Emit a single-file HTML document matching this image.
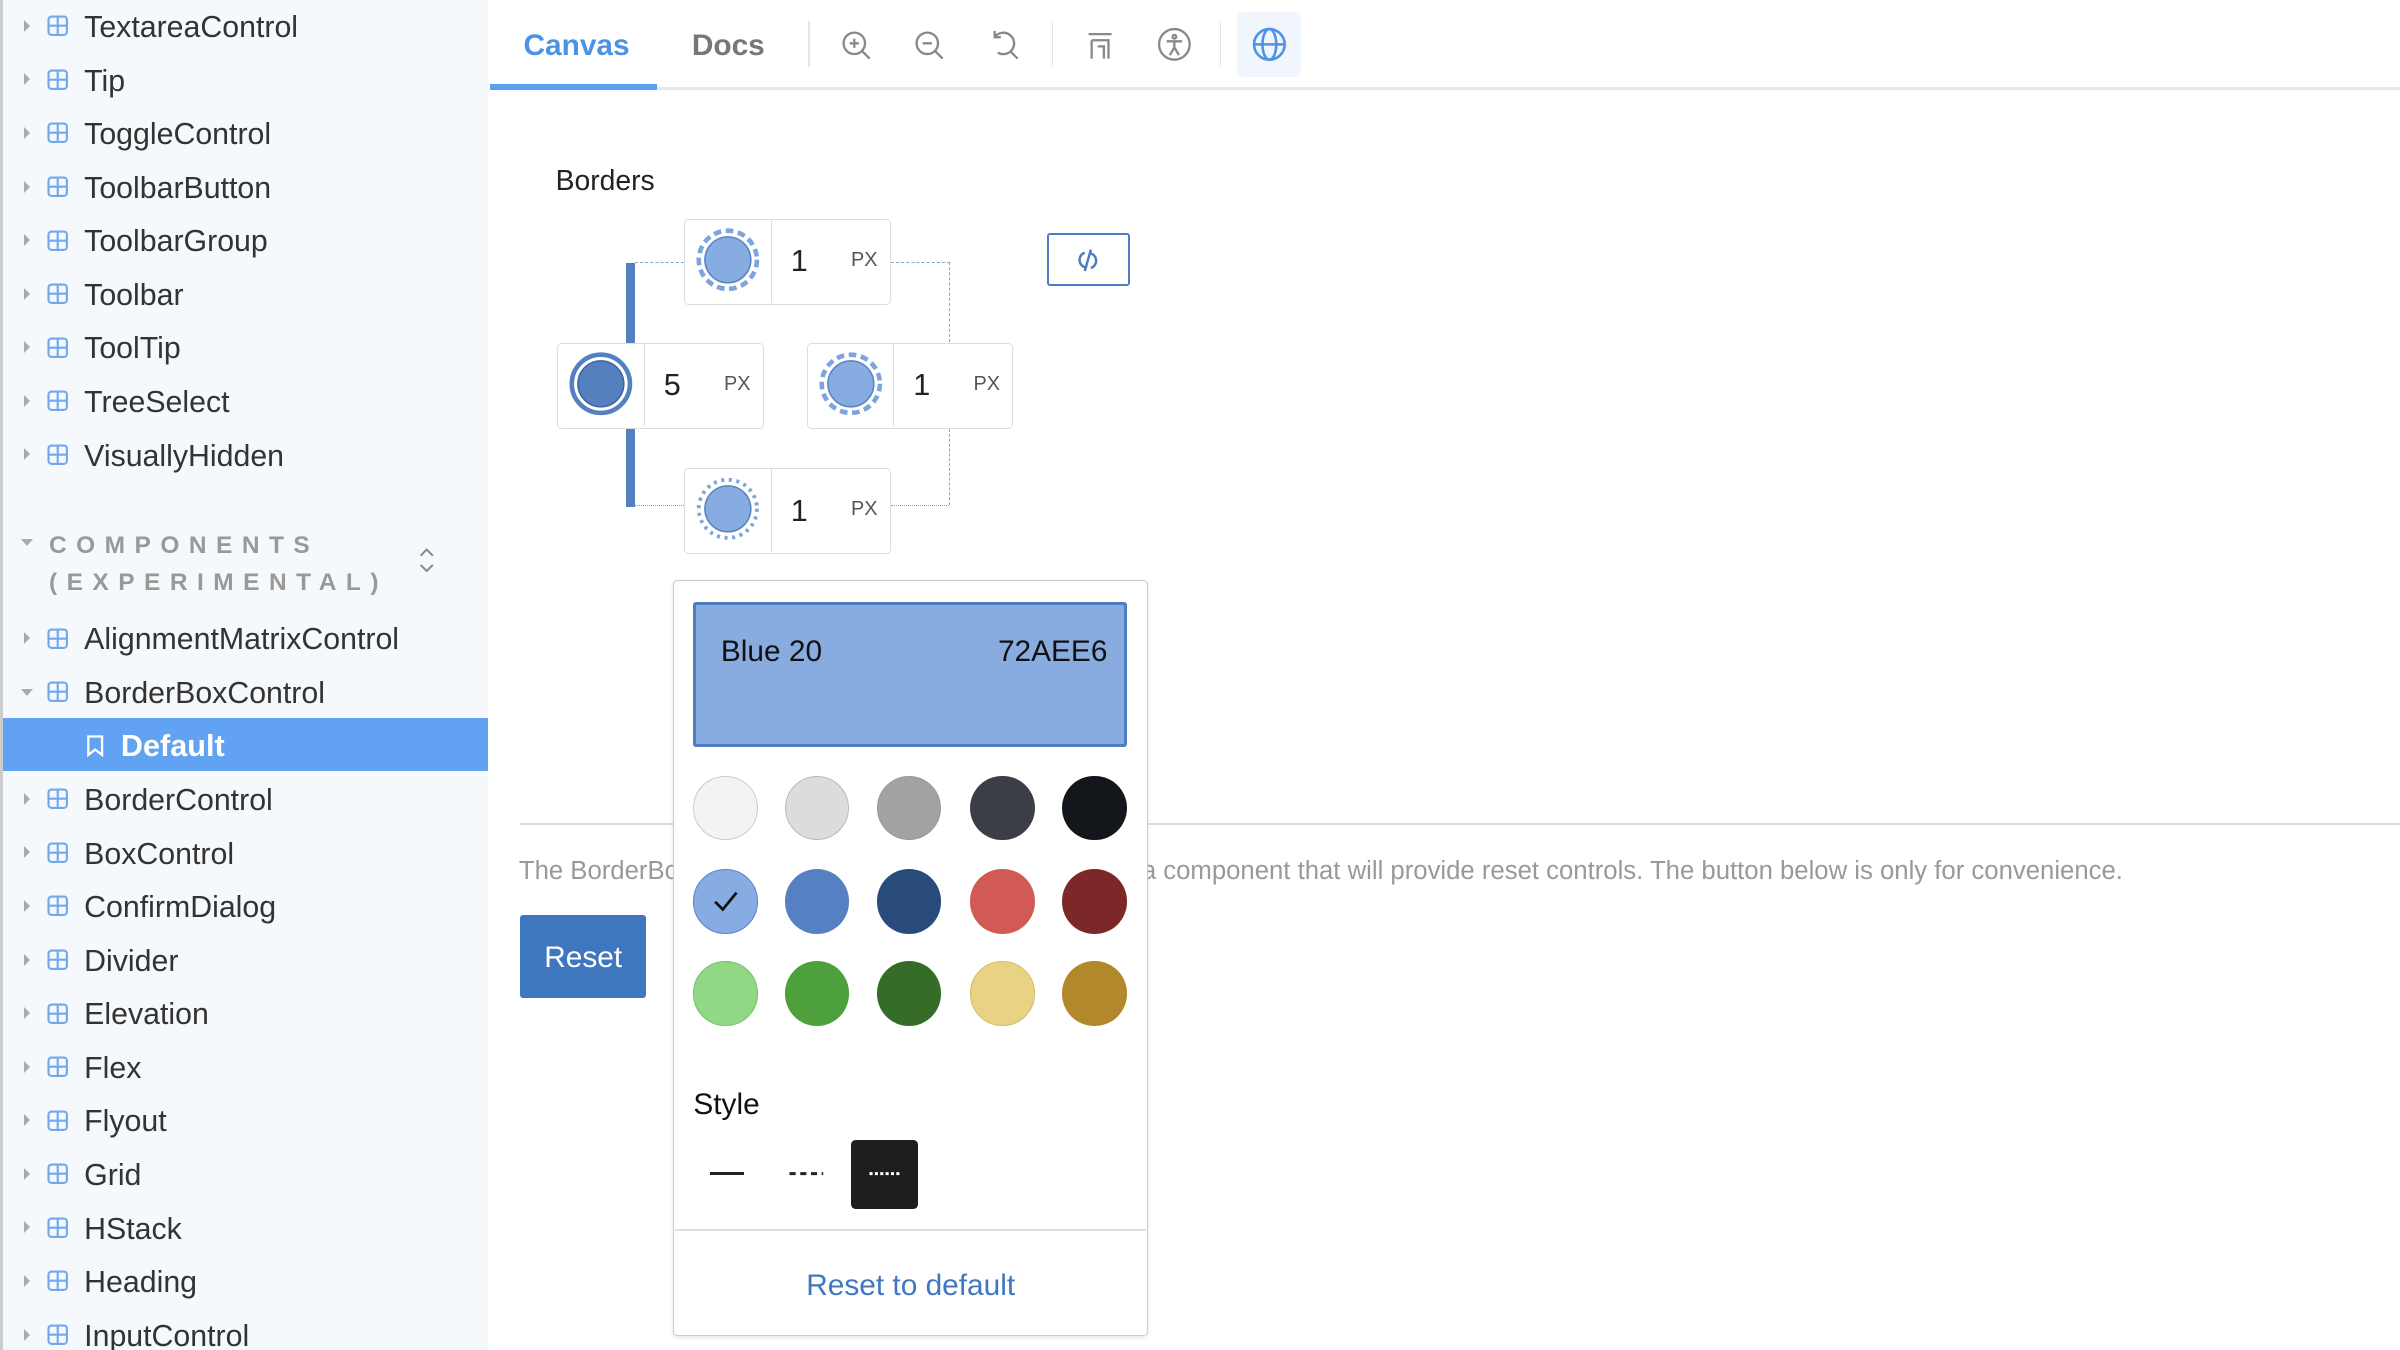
<!DOCTYPE html>
<html><head><meta charset="utf-8"><style>
html,body{margin:0;padding:0;overflow:hidden;background:#fff}
#root{position:relative;width:1568px;height:882px;zoom:1.530612;font-family:"Liberation Sans",sans-serif;overflow:hidden}
.abs{position:absolute}
#side{left:0;top:0;width:319px;height:882px;background:#f6f9fc}
.it{position:absolute;left:0;width:319px;height:35px;font-size:19.8px;color:#333;line-height:37px}
.it .ar{position:absolute;left:16px;top:13px;width:0;height:0;border-top:4px solid transparent;border-bottom:4px solid transparent;border-left:4px solid #aaa}
.it .ar.d{left:14px;top:15px;border-left:4px solid transparent;border-right:4px solid transparent;border-top:5px solid #aaa;border-bottom:0}
.it svg{position:absolute;left:31px;top:10px}
.it span{position:absolute;left:55px}
.box{position:absolute;width:135px;height:56px;border:1px solid #ddd;border-radius:3px;background:#fff;box-sizing:border-box}
.box .c{position:absolute;left:0;top:0;width:56px;height:54px;border-right:1px solid #ddd}
.box .n{position:absolute;left:69px;top:16px;font-size:20px;color:#222}
.box .px{position:absolute;right:8px;top:19px;font-size:13px;color:#555}
.sw{position:absolute;width:42px;height:42px;border-radius:50%;box-sizing:border-box}
</style></head><body><div id="root">
<div id="side" class="abs"></div>
<div class="abs" style="left:0;top:0;width:2px;height:882px;background:#ccc"></div>
<div id="items"></div>
<div class="abs" style="left:14px;top:352px;width:0;height:0;border-left:4px solid transparent;border-right:4px solid transparent;border-top:5px solid #aaa"></div>
<div class="abs" style="left:32px;top:345px;font-size:16px;font-weight:bold;color:#999;letter-spacing:6.2px;line-height:24px">COMPONENTS<br>(EXPERIMENTAL)</div>
<svg class="abs" style="left:272px;top:356px" width="14" height="20" viewBox="0 0 14 20"><path d="M3 7l4-4 4 4M3 13l4 4 4-4" fill="none" stroke="#888" stroke-width="1.3"/></svg>
<div class="abs" style="left:2px;top:469px;width:317px;height:35px;background:#62a2f2"></div>
<svg class="abs" style="left:56px;top:480px" width="12" height="15" viewBox="0 0 12 15"><path d="M1.5 1h9v12l-4.5-3.5L1.5 13z" fill="none" stroke="#fff" stroke-width="1.5"/></svg>
<div class="abs" style="left:79px;top:476px;font-size:20px;font-weight:bold;color:#fff">Default</div>

<div class="abs" style="left:320px;top:57px;width:1248px;height:2px;background:#e8e8e8"></div>
<div class="abs" style="left:320px;top:55px;width:109px;height:4px;background:#5a9ff0"></div>
<div class="abs" style="left:342px;top:19px;font-size:19.5px;font-weight:bold;color:#4d93e5">Canvas</div>
<div class="abs" style="left:452px;top:19px;font-size:19.5px;font-weight:bold;color:#777">Docs</div>
<div class="abs" style="left:528px;top:14px;width:1px;height:30px;background:#e5e5e5"></div>
<div class="abs" style="left:687px;top:14px;width:1px;height:30px;background:#e5e5e5"></div>
<div class="abs" style="left:797px;top:14px;width:1px;height:30px;background:#e5e5e5"></div>
<svg class="abs" style="left:548px;top:18px" width="24" height="24" viewBox="0 0 24 24" fill="none" stroke="#888" stroke-width="1.5"><circle cx="10" cy="10" r="7"/><path d="M15 15l5 5M10 7v6M7 10h6"/></svg>
<svg class="abs" style="left:596px;top:18px" width="24" height="24" viewBox="0 0 24 24" fill="none" stroke="#888" stroke-width="1.5"><circle cx="10" cy="10" r="7"/><path d="M15 15l5 5M7 10h6"/></svg>
<svg class="abs" style="left:645px;top:18px" width="24" height="24" viewBox="0 0 24 24" fill="none" stroke="#888" stroke-width="1.5"><path d="M5 6A7 7 0 1 1 7 16M5 2v4h4M15 15l5 5"/></svg>
<svg class="abs" style="left:708px;top:18px" width="22" height="24" viewBox="0 0 22 24" fill="none" stroke="#888" stroke-width="1.5"><path d="M3 4h15M5 8h11v12M5 8v12M9 12h4v8"/></svg>
<svg class="abs" style="left:755px;top:17px" width="24" height="24" viewBox="0 0 24 24" fill="none" stroke="#888" stroke-width="1.5"><circle cx="12" cy="12" r="10"/><circle cx="12" cy="7" r="1.2"/><path d="M7 10h10M12 10v4l-3 5M12 14l3 5"/></svg>
<div class="abs" style="left:808px;top:8px;width:42px;height:42px;background:#f1f6fd;border-radius:4px"></div>
<svg class="abs" style="left:817px;top:17px" width="24" height="24" viewBox="0 0 24 24" fill="none" stroke="#4d93e5" stroke-width="1.7"><circle cx="12" cy="12" r="10"/><ellipse cx="12" cy="12" rx="4.5" ry="10"/><path d="M2 12h20"/></svg>

<div class="abs" style="left:363px;top:107px;font-size:18.5px;color:#222">Borders</div>
<div class="abs" style="left:409px;top:172px;width:6px;height:159px;background:#5580c0"></div>
<div class="abs" style="left:415px;top:171px;width:32px;border-top:1px dashed #7ea4de"></div>
<div class="abs" style="left:582px;top:171px;width:38px;height:52px;border-top:1px dashed #7ea4de;border-right:1px dashed #7ea4de"></div>
<div class="abs" style="left:619px;top:280px;width:1px;height:50px;border-right:1px dashed #7ea4de"></div>
<div class="abs" style="left:582px;top:330px;width:38px;border-top:1px dotted #7ea4de"></div>
<div class="abs" style="left:415px;top:330px;width:32px;border-top:1px dotted #7ea4de"></div>

<div class="box" style="left:447px;top:143px"><div class="c"><svg width="56" height="53"><circle cx="28" cy="26" r="19" fill="none" stroke="#7ea4de" stroke-width="3" stroke-dasharray="5 3"/><circle cx="28" cy="26" r="15" fill="#86ace2" stroke="#5b84c4" stroke-width="1"/></svg></div><div class="n">1</div><div class="px">PX</div></div>
<div class="box" style="left:364px;top:224px"><div class="c"><svg width="56" height="53"><circle cx="28" cy="26" r="19" fill="none" stroke="#5580c0" stroke-width="3"/><circle cx="28" cy="26" r="15" fill="#5580c0" stroke="#3d66a8" stroke-width="1"/></svg></div><div class="n">5</div><div class="px">PX</div></div>
<div class="box" style="left:527px;top:224px"><div class="c"><svg width="56" height="53"><circle cx="28" cy="26" r="19" fill="none" stroke="#7ea4de" stroke-width="3" stroke-dasharray="5 3"/><circle cx="28" cy="26" r="15" fill="#86ace2" stroke="#5b84c4" stroke-width="1"/></svg></div><div class="n">1</div><div class="px">PX</div></div>
<div class="box" style="left:447px;top:306px"><div class="c"><svg width="56" height="53"><circle cx="28" cy="26" r="19" fill="none" stroke="#7ea4de" stroke-width="2.5" stroke-dasharray="2 3"/><circle cx="28" cy="26" r="15" fill="#86ace2" stroke="#5b84c4" stroke-width="1"/></svg></div><div class="n">1</div><div class="px">PX</div></div>
<div class="abs" style="left:684px;top:152px;width:54px;height:35px;border:1.5px solid #4d7cc0;border-radius:2px;box-sizing:border-box"></div>
<svg class="abs" style="left:700px;top:160px" width="22" height="20" viewBox="0 0 22 20" fill="none" stroke="#4d7cc0" stroke-width="1.6"><path d="M9 5a5 5 0 0 0 0 9.5M13 5.5a5 5 0 0 1 0 9.5M13 3l-4 14"/></svg>

<div class="abs" style="left:340px;top:538px;width:1228px;height:1px;background:#ddd"></div>
<div class="abs" style="left:339px;top:560px;font-size:16.8px;color:#999;white-space:nowrap">The BorderBox</div>
<div class="abs" style="left:746px;top:560px;font-size:16.8px;color:#999;white-space:nowrap">a component that will provide reset controls. The button below is only for convenience.</div>
<div class="abs" style="left:340px;top:598px;width:82px;height:54px;background:#3e77bf;border-radius:2px;color:#fff;font-size:19.5px;line-height:56px;text-align:center">Reset</div>

<div class="abs" style="left:440px;top:379px;width:310px;height:494px;background:#fff;border:1px solid #ccc;border-radius:3px;box-sizing:border-box;box-shadow:0 1px 3px rgba(0,0,0,.1)"></div>
<div class="abs" style="left:453px;top:393px;width:283px;height:95px;background:#89ace0;border:2px solid #4d7cc0;border-radius:2px;box-sizing:border-box"></div>
<div class="abs" style="left:471px;top:415px;font-size:19.5px;color:#111">Blue 20</div>
<div class="abs" style="left:652px;top:415px;font-size:19.5px;color:#111">72AEE6</div>
<div class="sw" style="left:453px;top:507px;background:#f3f3f3;border:1px solid #ccc"></div>
<div class="sw" style="left:513px;top:507px;background:#dcdcdc;border:1px solid #bbb"></div>
<div class="sw" style="left:573px;top:507px;background:#a2a2a4;border:1px solid #999"></div>
<div class="sw" style="left:634px;top:507px;background:#3b3e44"></div>
<div class="sw" style="left:694px;top:507px;background:#13161a"></div>
<div class="sw" style="left:453px;top:568px;background:#86ace2;border:1px solid #5b84c4"></div>
<svg class="abs" style="left:463px;top:578px" width="22" height="22" viewBox="0 0 22 22"><path d="M4 11l5 5 9-11" fill="none" stroke="#111" stroke-width="1.8"/></svg>
<div class="sw" style="left:513px;top:568px;background:#5580c2"></div>
<div class="sw" style="left:573px;top:568px;background:#284b7c"></div>
<div class="sw" style="left:634px;top:568px;background:#d15a55"></div>
<div class="sw" style="left:694px;top:568px;background:#7c2828"></div>
<div class="sw" style="left:453px;top:628px;background:#90d884;border:1px solid #7ac070"></div>
<div class="sw" style="left:513px;top:628px;background:#4ea03c"></div>
<div class="sw" style="left:573px;top:628px;background:#356d28"></div>
<div class="sw" style="left:634px;top:628px;background:#e8d384;border:1px solid #d2bd6c"></div>
<div class="sw" style="left:694px;top:628px;background:#b3882c"></div>
<div class="abs" style="left:453px;top:711px;font-size:19.5px;color:#111">Style</div>
<div class="abs" style="left:464px;top:766px;width:22px;height:2px;background:#222"></div>
<svg class="abs" style="left:515px;top:762px" width="25" height="10"><path d="M1 5h22" stroke="#222" stroke-width="2" stroke-dasharray="4 3"/></svg>
<div class="abs" style="left:556px;top:745px;width:44px;height:45px;background:#1e1e1e;border-radius:3px"></div>
<svg class="abs" style="left:567px;top:762px" width="24" height="10"><path d="M1 5h21" stroke="#fff" stroke-width="2" stroke-dasharray="2 1.5"/></svg>
<div class="abs" style="left:441px;top:803px;width:308px;height:1px;background:#ddd"></div>
<div class="abs" style="left:441px;top:829px;width:308px;text-align:center;font-size:19.5px;color:#3f78c0">Reset to default</div>
</div>
<script>
var names=[["TextareaControl",0],["Tip",35],["ToggleControl",70],["ToolbarButton",105],["ToolbarGroup",140],["Toolbar",175],["ToolTip",210],["TreeSelect",245],["VisuallyHidden",280],["AlignmentMatrixControl",400],["BorderBoxControl",435,1],["BorderControl",505],["BoxControl",540],["ConfirmDialog",575],["Divider",610],["Elevation",645],["Flex",680],["Flyout",715],["Grid",750],["HStack",785],["Heading",820],["InputControl",855]];
var h="";names.forEach(function(n){h+='<div class="it" style="top:'+n[1]+'px"><div class="ar'+(n[2]?' d':'')+'"></div><svg width="14" height="14" viewBox="0 0 14 14"><rect x="1" y="1" width="12" height="12" rx="2" fill="none" stroke="#71a8ee" stroke-width="1.4"/><path d="M7 1v12M1 7h12" stroke="#71a8ee" stroke-width="1.4"/></svg><span>'+n[0]+'</span></div>';});
document.getElementById("items").innerHTML=h;
</script>
</body></html>
